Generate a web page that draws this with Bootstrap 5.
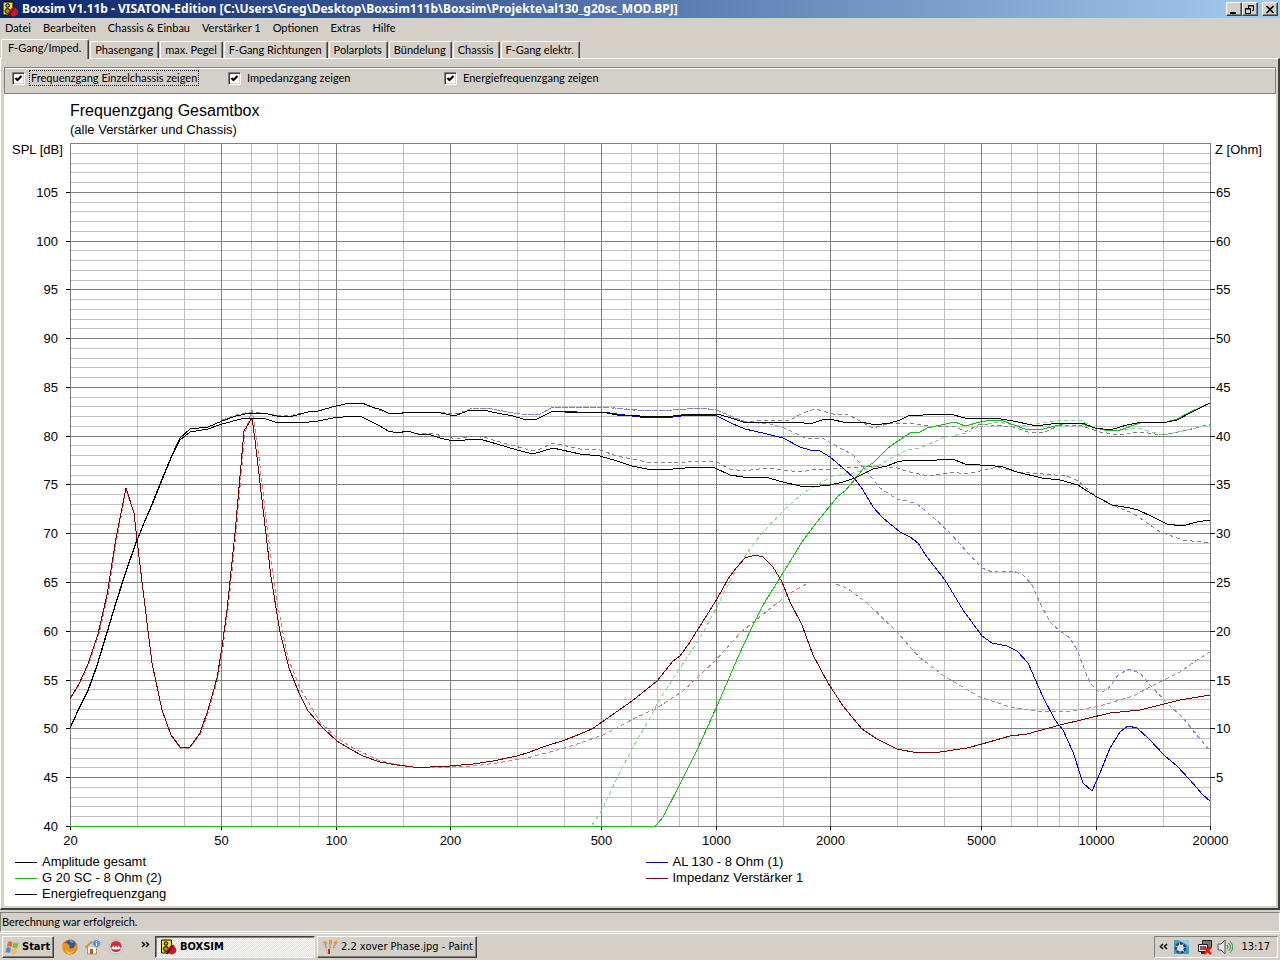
<!DOCTYPE html>
<html lang="de">
<head>
<meta charset="utf-8">
<meta name="viewport" content="width=device-width, initial-scale=1">
<title>Boxsim V1.11b - VISATON-Edition</title>
<link rel="stylesheet" href="https://cdn.jsdelivr.net/npm/bootstrap@5.3.0/dist/css/bootstrap.min.css">
<style>
  :root { --face: #d4d0c8; --dark: #404040; --shade: #808080; }
  body { background: var(--face); color: #000; font: 11px/16px Lato, "Liberation Sans", Arial, sans-serif; cursor: default; }
  button { font: inherit; color: inherit; border-radius: 0; }
  svg { display: block; flex-shrink: 0; }
  .title-bar { height: 18px; padding: 0 2px; color: #fff; background: linear-gradient(90deg, #0a246a, #a6caf0); }
  .title-text { font: bold 12px/18px "Noto Sans", "DejaVu Sans", sans-serif; margin: 0; }
  .bevel { background: var(--face); border: 1px solid; border-color: #fff var(--dark) var(--dark) #fff; box-shadow: inset -1px -1px 0 var(--shade); padding: 0; }
  .win-btn { width: 16px; height: 14px; }
  .menu-bar { height: 21px; padding: 2px 5px 0; gap: 12px; }
  .flat { background: none; border: 0; padding: 0; white-space: nowrap; }
  .tab-strip { height: 19px; padding-left: 1px; }
  .tab-btn { height: 17px; background: var(--face); border: solid; border-width: 1px 1px 0; border-color: #fff var(--dark) #fff #fff; box-shadow: inset -1px 0 0 var(--shade); border-radius: 2px 2px 0 0; padding: 0 5px 0 4px; margin-right: 1px; white-space: nowrap; }
  .tab-btn.active { height: 20px; margin-bottom: -1px; padding: 0 7px 4px 6px; position: relative; }
  .page-frame { border: solid; border-width: 1px 2px 2px 1px; border-color: #fff var(--dark) var(--dark) #fff; padding: 8px 2px 2px 3px; }
  .options-box { height: 27px; border: 1px solid var(--shade); box-shadow: inset 0 1px 0 #fff; padding: 2px 7px 0; }
  .option { width: 216px; gap: 4px; }
  .option label { line-height: 14px; padding: 0 1px; border: 1px solid transparent; white-space: nowrap; }
  .option label.focused { border: 1px dotted #000; }
  .tick { appearance: none; width: 13px; height: 13px; margin: 0; border: 1px solid; border-color: var(--shade) #fff #fff var(--shade); box-shadow: inset 1px 1px 0 var(--dark), inset -1px -1px 0 var(--face); background: #fff; }
  .tick:checked { background: #fff url("data:image/svg+xml,%3Csvg xmlns='http://www.w3.org/2000/svg' viewBox='0 0 11 11'%3E%3Cpath d='M2.5 5L4.5 7L8.5 3' fill='none' stroke='%23000' stroke-width='2.2'/%3E%3C/svg%3E") center/11px no-repeat; }
  .chart-pane { background: #fff; }
  .chart { width: 100%; height: auto; font: 13px "Liberation Sans", Arial, sans-serif; }
  .chart .heading { font-size: 16px; }
  .chart polyline { fill: none; stroke: #000; shape-rendering: crispEdges; }
  .chart .target { stroke-dasharray: 4 3; stroke: #808080; }
  .chart .blue { stroke: #0000c0; } .chart .green { stroke: #10c010; } .chart .red { stroke: #780000; }
  .chart .target.blue { stroke: #8080d8; } .chart .target.green { stroke: #80d880; } .chart .target.red { stroke: #b88080; }
  .legend-grid { display: grid; grid-template-columns: 1fr 1fr; padding: 3px 0 4px 11px; margin: 0; list-style: none; font: 13px/16px "Liberation Sans", Arial, sans-serif; }
  .legend-grid li { display: flex; align-items: center; gap: 5px; }
  .key { width: 22px; height: 1px; background: #000; }
  .key.green { background: #10c010; } .key.blue { background: #0000c0; } .key.red { background: #780000; }
  .status { height: 20px; margin: 2px 0 1px; border: 1px solid; border-color: var(--shade) #fff #fff var(--shade); padding: 1px 1px 0; }
  .task-bar { height: 28px; border-top: 1px solid #fff; padding: 2px 2px 3px; font: 11px/16px "DejaVu Sans Condensed", "DejaVu Sans", sans-serif; }
  .start-btn { width: 52px; height: 22px; font-weight: bold; padding-left: 2px; gap: 2px; }
  .quick { gap: 7px; padding: 0 5px 0 8px; width: 101px; }
  .task-btn { height: 22px; width: 160px; padding: 0 3px 0 4px; gap: 3px; margin-right: 2px; white-space: nowrap; overflow: hidden; }
  .task-btn.active { border-color: var(--dark) #fff #fff var(--dark); box-shadow: inset 1px 1px 0 var(--shade); background: repeating-conic-gradient(#fff 0 25%, #dfdcd6 0 50%) 0 0/2px 2px; font-weight: bold; }
  .tray { height: 22px; border: 1px solid; border-color: var(--shade) #fff #fff var(--shade); padding: 0 7px 0 4px; }
</style>
</head>
<body class="d-flex flex-column min-vh-100">

<svg width="0" height="0" class="position-absolute" aria-hidden="true">
  <symbol id="app" viewBox="0 0 16 16">
    <path d="M1 1h10v13H1z" fill="#f8e800" stroke="#000"/>
    <circle cx="5.500" cy="4.500" r="1.800" fill="#a8a090" stroke="#000"/><circle cx="5.500" cy="10" r="2.500" fill="#a09020" stroke="#000"/>
    <circle cx="11.500" cy="11" r="4.400" fill="#d01828"/><path d="M6 15L13 6" stroke="#600" stroke-width="1.300"/>
  </symbol>
</svg>

<header>
  <div class="title-bar d-flex align-items-center">
    <svg width="16" height="16" class="me-1"><use href="#app"/></svg>
    <h1 class="title-text flex-grow-1 text-truncate">Boxsim V1.11b - VISATON-Edition [C:\Users\Greg\Desktop\Boxsim111b\Boxsim\Projekte\al130_g20sc_MOD.BPJ]</h1>
    <button class="bevel win-btn" aria-label="Minimieren"><svg width="13" height="11"><path d="M3 8h6v2H3z"/></svg></button>
    <button class="bevel win-btn me-1" aria-label="Wiederherstellen"><svg width="13" height="11" fill="none" stroke="#000"><path d="M5.500 4V1.500h5v5H9M5 2h6M2.500 4.500h5v5h-5zM2 5h6"/></svg></button>
    <button class="bevel win-btn" aria-label="Schließen"><svg width="13" height="11"><path d="M3.500 2l7 7m0-7l-7 7" stroke="#000" stroke-width="1.600"/></svg></button>
  </div>
  <nav class="menu-bar d-flex align-items-start">
    <button class="flat">Datei</button><button class="flat">Bearbeiten</button><button class="flat">Chassis &amp; Einbau</button><button class="flat">Verstärker 1</button><button class="flat">Optionen</button><button class="flat">Extras</button><button class="flat">Hilfe</button>
  </nav>
</header>

<main class="flex-grow-1 d-flex flex-column">
  <div class="tab-strip d-flex align-items-end" role="tablist">
    <button class="tab-btn active" role="tab" aria-selected="true">F-Gang/Imped.</button>
    <button class="tab-btn" role="tab">Phasengang</button>
    <button class="tab-btn" role="tab">max. Pegel</button>
    <button class="tab-btn" role="tab">F-Gang Richtungen</button>
    <button class="tab-btn" role="tab">Polarplots</button>
    <button class="tab-btn" role="tab">Bündelung</button>
    <button class="tab-btn" role="tab">Chassis</button>
    <button class="tab-btn" role="tab">F-Gang elektr.</button>
  </div>
  <section class="page-frame flex-grow-1 d-flex flex-column">
    <form class="options-box d-flex align-items-start">
      <div class="option d-flex align-items-center"><input class="tick" type="checkbox" id="o1" checked><label for="o1" class="focused">Frequenzgang Einzelchassis zeigen</label></div>
      <div class="option d-flex align-items-center"><input class="tick" type="checkbox" id="o2" checked><label for="o2">Impedanzgang zeigen</label></div>
      <div class="option d-flex align-items-center"><input class="tick" type="checkbox" id="o3" checked><label for="o3">Energiefrequenzgang zeigen</label></div>
    </form>
    <div class="chart-pane flex-grow-1">
      <svg class="chart" viewBox="4 94 1272 757" role="img" aria-label="Frequenzgang Gesamtbox">
        <text class="heading" x="70" y="116">Frequenzgang Gesamtbox</text>
        <text x="70" y="134">(alle Verstärker und Chassis)</text>
        <text x="12" y="154">SPL [dB]</text>
        <text x="1215" y="154">Z [Ohm]</text>
        <g id="grid"></g>
        <polyline class="target" points="222,420 236,415 250,412 263,413 277,415 293,415 308,412 318,411 336,406 350,403 362,403 382,411 388,413 398,414 407,412 437,412 457,414 473,408 487,408 513,413 530,415 540,414 553,407 577,408 602,407 640,410 673,410 700,408 717,410 733,417 745,422 767,420 790,420 803,413 815,409 833,414 847,414 860,421 873,428 887,424 910,423 930,426 955,426 965,432 980,424 1013,427 1028,432 1043,433 1060,425 1082,426 1100,432 1120,435 1140,432 1163,435 1183,431 1200,427 1210,424"/>
        <polyline class="target" points="388,431 398,433 407,431 418,434 430,433 447,437 457,439 473,436 487,438 503,443 530,450 538,450 553,443 580,449 600,450 617,456 647,462 673,463 697,461 717,462 730,469 743,471 767,468 800,472 817,469 833,469 860,467 880,466 897,468 913,473 930,476 953,472 965,474 980,471 997,467 1017,472 1043,474 1067,476 1078,481 1097,497 1112,505 1130,512 1140,518 1160,532 1183,540 1210,543"/>
        <polyline class="target blue" points="473,408 487,408 513,413 530,415 540,414 553,407 577,408 602,407 633,410 673,410 700,408 717,410 733,418 747,422 770,424 787,429 807,439 822,438 833,444 853,455 867,472 880,488 897,499 907,501 917,504 933,517 950,533 967,552 982,568 992,572 1013,571 1023,575 1032,585 1040,603 1050,622 1060,631 1070,638 1077,650 1082,663 1090,683 1100,693 1108,689 1118,675 1129,669 1140,673 1150,685 1167,703 1183,718 1210,751"/>
        <polyline class="target green" points="592,825 602,810 617,778 633,747 650,718 658,702 680,668 700,638 717,607 733,575 748,552 763,532 783,511 803,493 817,485 833,476 853,473 877,466 907,450 920,448 943,438 967,433 982,425 997,422 1020,426 1043,423 1063,420 1080,420 1095,428 1113,431 1137,428 1163,435 1183,431 1200,427 1210,426"/>
        <polyline class="target red" points="70,700 79,685 89,664 99,634 108,595 117,538 126,490 134,513 137,540 143,590 152,663 162,710 171,735 180,748 190,748 201,733 209,710 218,678 223,647 228,610 236,533 245,433 252,410 257,440 267,527 277,602 288,658 300,688 320,722 337,738 353,748 380,761 413,767 450,767 473,766 497,763 527,758 565,748 583,742 603,735 617,728 633,719 657,708 683,691 715,661 740,633 767,611 790,593 810,582 830,582 847,588 867,603 897,632 920,658 947,678 980,697 1010,707 1043,712 1073,711 1100,706 1133,696 1150,687 1180,672 1197,660 1210,652"/>
        <polyline class="blue" points="553,411 577,412 590,412 602,412 617,414 640,417 673,417 690,415 710,415 717,416 733,424 745,429 767,434 783,438 800,447 810,450 820,451 830,457 843,468 855,479 863,490 873,507 883,518 900,532 910,537 918,543 927,557 945,580 963,610 982,636 992,643 1007,646 1017,651 1028,663 1043,697 1055,720 1063,730 1073,752 1083,783 1092,791 1100,773 1110,748 1120,732 1128,726 1137,728 1148,738 1165,756 1177,766 1190,780 1203,795 1210,801"/>
        <polyline class="green" points="70,826.500 655,826.500 663,817 680,784 698,748 717,706 738,657 752,627 763,605 783,573 802,542 817,522 838,496 845,491 855,479 863,469 873,463 887,449 895,443 910,433 920,432 927,428 955,422 965,426 980,422 992,420 1003,421 1025,429 1043,429 1067,423 1082,424 1095,428 1110,431 1120,430 1140,423 1167,422 1177,419 1190,412 1210,403"/>
        <polyline class="red" points="70,699 79,684 88,664 98,634 107,595 116,538 126,488 134,513 137,540 143,590 152,663 162,710 171,735 180,747 190,747 200,733 208,710 217,678 222,647 227,610 235,533 244,431 252,418 255,440 262,500 271,577 280,632 289,668 299,693 308,711 323,728 337,741 350,749 363,756 380,762 397,765 413,767 430,767 450,766 473,764 493,761 517,756 530,752 543,747 565,740 580,734 592,729 602,722 632,701 657,681 673,661 680,656 690,642 700,626 717,599 728,579 737,567 745,558 755,555 763,557 773,567 782,582 790,602 802,625 813,655 828,683 843,706 862,729 877,739 897,749 918,753 940,752 967,748 982,744 1010,736 1027,734 1060,725 1110,713 1140,710 1180,700 1210,695"/>
        <polyline points="70,728 79,709 88,691 97,666 107,633 116,603 126,572 135,546 144,523 152,505 162,480 172,456 180,440 190,432 208,429 222,424 241,419 263,418 275,422 300,423 318,421 333,418 353,416 362,417 380,426 388,431 398,433 407,431 418,434 428,434 440,438 453,441 465,440 473,439 483,440 497,444 517,450 533,454 553,448 580,454 600,456 617,461 632,466 647,469 673,469 697,467 715,468 730,475 743,477 765,477 783,482 800,486 810,487 830,485 843,482 855,478 873,469 887,466 897,462 907,460 930,461 945,459 955,460 965,464 980,465 995,466 1003,467 1017,472 1042,478 1060,480 1078,485 1087,491 1097,497 1112,505 1130,508 1138,510 1153,517 1167,524 1182,526 1197,522 1210,520"/>
        <polyline points="70,728 79,708 88,690 97,665 107,632 116,602 126,571 135,545 144,523 152,504 162,479 172,455 180,438 190,429 208,427 222,421 236,416 250,413 263,413 277,416 293,416 308,412 318,411 336,406 350,403 362,403 372,407 382,410 388,413 398,414 407,412 417,413 437,412 450,415 457,415 470,410 483,410 497,413 513,416 523,419 537,419 545,415 553,411 577,413 590,412 602,412 617,415 640,416 673,416 690,414 717,414 728,417 743,422 797,422 810,424 822,420 830,419 847,423 862,422 875,425 890,423 900,420 910,415 918,416 928,414 950,414 965,418 995,418 1013,421 1032,425 1043,425 1060,423 1082,423 1095,428 1110,430 1127,425 1142,422 1167,422 1177,420 1190,413 1210,403"/>
      </svg>
      <ul class="legend-grid">
        <li><span class="key"></span>Amplitude gesamt</li>
        <li><span class="key blue"></span>AL 130 - 8 Ohm (1)</li>
        <li><span class="key green"></span>G 20 SC - 8 Ohm (2)</li>
        <li><span class="key red"></span>Impedanz Verstärker 1</li>
        <li><span class="key"></span>Energiefrequenzgang</li>
      </ul>
    </div>
  </section>
</main>

<footer>
  <div class="status">Berechnung war erfolgreich.</div>
  <div class="task-bar d-flex align-items-center">
    <button class="bevel start-btn d-flex align-items-center">
      <svg width="15" height="15" viewBox="0 0 15 15"><path d="M3 2q2-1.500 4.500 0L6.500 7Q4 5.500 2 7z" fill="#e86838"/><path d="M8.500 2.500q2.500 1.300 5 0L12.500 7.500q-2.500 1.300-5 0z" fill="#80b840"/><path d="M1.500 8q2-1.300 4.500 0L5 13Q3 11.500.500 13z" fill="#4888d0"/><path d="M7 8.500q2.500 1.300 5 0L11 13.500q-2.500 1.300-5 0z" fill="#f0c040"/></svg>Start</button>
    <div class="quick d-flex align-items-center">
      <button class="flat" aria-label="Firefox"><svg width="16" height="16" viewBox="0 0 16 16"><circle cx="8" cy="8" r="7.500" fill="#d86010"/><circle cx="8.500" cy="6.500" r="5.200" fill="#2858a8"/><path d="M8 1q3 1 4 3l-4-1z" fill="#68b0e8"/><path d="M1 3l1.500 1.500L5 4l1 1.500 2 .5-1 2 1.500 1.500q3 .5 4.500-3l1.500-2q2 7-4 10-7 2.500-10-4Q0 6 1 3z" fill="#f09020"/><path d="M3 11q4 4 10 .500-3 4-7 3z" fill="#f8d040"/></svg></button>
      <button class="flat" aria-label="Startseite"><svg width="16" height="16" viewBox="0 0 16 16"><path d="M2.500 8v7h9V8" fill="#f8f0e0" stroke="#b09070"/><path d="M.500 8.500L6.500 3l6 5.500" fill="none" stroke="#d09040" stroke-width="2"/><path d="M5 10h3v5H5z" fill="#a06028"/><circle cx="11.500" cy="4.500" r="4" fill="#5890d0" stroke="#b8d0f0"/><path d="M11 2h1v1h-1zM11 4h1v3h-1z" fill="#fff"/></svg></button>
      <button class="flat" aria-label="Avira"><svg width="16" height="16" viewBox="0 0 16 16"><circle cx="8" cy="8" r="7" fill="#e8e0e0" stroke="#c0b8b8"/><circle cx="8" cy="7.500" r="5.500" fill="#d02838"/><path d="M3 9.500l3-3.500v3l2-2.500 2 2.500V6l3 3.500q-2 1-5 1t-5-1z" fill="#fff"/></svg></button>
      <button class="flat ms-auto pb-1" aria-label="Weitere"><svg width="9" height="8"><path d="M1 1l2.500 2.500L1 6m4-5l2.500 2.500L5 6" fill="none" stroke="#000" stroke-width="1.500"/></svg></button>
    </div>
    <button class="bevel task-btn active d-flex align-items-center"><svg width="17" height="16"><use href="#app"/></svg>BOXSIM</button>
    <button class="bevel task-btn d-flex align-items-center"><svg width="16" height="16" viewBox="0 0 16 16"><path d="M6 14L3 5m5 9V5m2 9l3-9" stroke="#a89078" stroke-width="1.200"/><path d="M1 2l4 1v3L2 5zM7 1h3v4H7zM12 3l3-2v4l-3 1z" fill="#e09840"/><path d="M4 9l5 1 3-1-1 6H6z" fill="#d8d0c8"/><path d="M6 10h2v5H6z" fill="#b83020"/></svg>2.2 xover Phase.jpg - Paint</button>
    <div class="tray d-flex align-items-center ms-auto">
      <svg width="10" height="8" class="me-1"><path d="M4 1L1.500 3.500 4 6m4-5L5.500 3.500 8 6" fill="none" stroke="#000" stroke-width="1.500"/></svg>
      <svg width="16" height="16" viewBox="0 0 16 16"><path d="M1 1h15v14H1z" fill="#4898c0"/><path d="M5 1h11v6z" fill="#90d0e8"/><circle cx="7.500" cy="9" r="4.500" fill="#e8e8f0" stroke="#204878" stroke-width="2.500" stroke-dasharray="3 1"/><circle cx="7.500" cy="9" r="1.500" fill="#f0c8a0"/></svg>
      <svg width="16" height="16" viewBox="0 0 16 16" class="ms-2 me-1"><path d="M5.500 1.500h9v7h-9z" fill="#777" stroke="#222"/><path d="M1.500 5.500h9v7h-9z" fill="#999" stroke="#222"/><path d="M2.500 6.500h7v5h-7z" fill="#666" stroke="#eee"/><path d="M4 14h5" stroke="#222" stroke-width="2"/><path d="M7 8l7 7m0-7l-7 7" stroke="#e01818" stroke-width="2.500"/></svg>
      <svg width="16" height="16" viewBox="0 0 16 16" class="me-2"><path d="M1 5h3l4-4v14l-4-4H1z" fill="#e8e8e8" stroke="#555"/><path d="M10 6q2 2 0 4m1.500-6q4 4 0 8m1.500-10q5.500 6 0 12" fill="none" stroke="#389848"/></svg>
      <time>13:17</time>
    </div>
  </div>
</footer>

<script src="https://cdn.jsdelivr.net/npm/bootstrap@5.3.0/dist/js/bootstrap.bundle.min.js"></script>
<script>
  // Logarithmic frequency axis, linear level (left) and impedance (right) axes.
  const left = 70, right = 1210, top_ = 143, bottom = 826;
  const fx = f => left + Math.round(Math.log10(f / 20) * 380);
  const ly = db => bottom - Math.round((db - 40) * (bottom - top_) / 70);
  const line = (x1, y1, x2, y2, c) => `<path d="M${x1} ${y1}L${x2} ${y2}" stroke="${c}" shape-rendering="crispEdges"/>`;
  const label = (x, y, t, a) => `<text x="${x}" y="${y}" text-anchor="${a}">${t}</text>`;
  let minor = '', major = '', marks = '';
  for (let db = 41; db < 110; db++)
    if (db % 5) minor += line(left, ly(db) + .5, right, ly(db) + .5, '#c0c0c0');
  const fine = [30, 40, 60, 70, 80, 90, 150];
  [1, 10, 100].forEach(k => fine.forEach(f => {
    const x = fx(f * k) + .5;
    minor += line(x, top_, x, bottom, '#c0c0c0');
  }));
  for (let db = 40; db <= 110; db += 5) {
    const y = ly(db);
    major += line(left, y + .5, right, y + .5, '#808080');
    if (db < 110) {
      marks += line(left - 4, y + .5, left, y + .5, '#000') + label(58, y + 5, db, 'end');
      if (db > 40) marks += line(right, y + .5, right + 5, y + .5, '#000') + label(1216, y + 5, db - 40, 'start');
    }
  }
  [20, 50, 100, 200, 500, 1000, 2000, 5000, 10000, 20000].forEach(f => {
    const x = fx(f) + .5;
    major += line(x, top_, x, bottom, '#808080');
    marks += line(x, bottom, x, bottom + 4, '#000') + label(x, 845, f, 'middle');
  });
  document.getElementById('grid').innerHTML = minor + major + marks;
</script>
</body>
</html>
